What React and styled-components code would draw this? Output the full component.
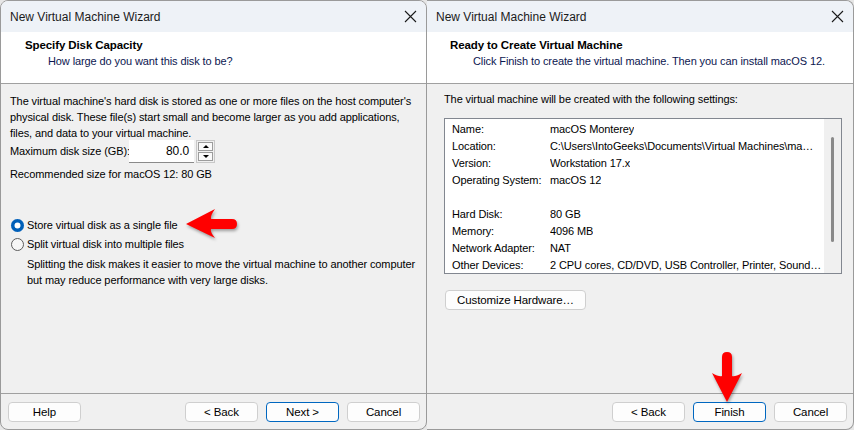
import React from "react";
import styled, { createGlobalStyle } from "styled-components";

const GlobalStyle = createGlobalStyle`
  html, body { margin: 0; padding: 0; background: #e6e6e6; }
  body {
    width: 854px; height: 430px; overflow: hidden;
    font-family: "Liberation Sans", Arial, sans-serif;
    font-size: 11px; letter-spacing: -0.1px; color: #000;
    white-space: nowrap;
  }
  * { box-sizing: border-box; }
`;

const Stage = styled.div`
  position: relative;
  display: flex;
  width: 854px;
  height: 430px;
`;

const Window = styled.div`
  width: 427px;
  height: 430px;
  display: flex;
  flex-direction: column;
  background: #f0f0f0;
  border: 1px solid #9a9a9a;
  border-left: ${(p) => (p.$joined ? "none" : "1px solid #9a9a9a")};
  border-radius: ${(p) => (p.$joined ? "0 8px 8px 0" : "8px")};
  overflow: hidden;
`;

const TitleBar = styled.div`
  height: 31px;
  flex: none;
  display: flex;
  align-items: center;
  justify-content: space-between;
  padding: 0 8px 0 ${(p) => p.$pad}px;
  background: #eef2f7;
  color: #1b1b1b;
  font-size: 12px;
  letter-spacing: 0;
`;

const Close = styled.svg`
  width: 13px;
  height: 13px;
  margin-right: 1px;
`;

const Header = styled.div`
  height: 52px;
  flex: none;
  background: #fff;
  border-bottom: 1px solid #a0a0a0;
  padding: 5px 0 0 ${(p) => p.$pad}px;
  line-height: 16px;
`;

const HeaderTitle = styled.div`
  font-weight: bold;
  font-size: 11.5px;
  color: #000;
`;

const HeaderSub = styled.div`
  padding-left: 23px;
  color: #0c1650;
`;

const Body = styled.div`
  flex: 1;
  padding: ${(p) => p.$pt}px 10px 0 ${(p) => p.$pl}px;
  line-height: 16px;
`;

const Para = styled.p`
  margin: 0;
`;

const SpinRow = styled.div`
  display: flex;
  align-items: center;
  height: 24px;
  margin-top: -2px;
`;

const SpinLabel = styled.span`
  width: 119px;
  flex: none;
`;

const SpinInput = styled.div`
  width: 65px;
  height: 23px;
  background: #fff;
  border-bottom: 1px solid #8a8a8a;
  text-align: right;
  padding-right: 5px;
  line-height: 22px;
  font-size: 12px;
`;

const SpinButtons = styled.div`
  display: flex;
  flex-direction: column;
  gap: 1px;
  margin-left: 2px;
  padding: 1px;
  border: 1px solid #c8c8c8;
`;

const SpinBtn = styled.div`
  width: 15px;
  height: 9px;
  background: #fafafa;
  border: 1px solid #9c9c9c;
  display: flex;
  align-items: center;
  justify-content: center;
  &::after {
    content: "";
    border-left: 3px solid transparent;
    border-right: 3px solid transparent;
    ${(p) => (p.$down ? "border-top: 3px solid #000;" : "border-bottom: 3px solid #000;")}
  }
`;

const Note = styled.div`
  margin-top: 3px;
`;

const RadioGroup = styled.div`
  margin-top: 35px;
  display: flex;
  flex-direction: column;
  gap: 3px;
`;

const RadioRow = styled.label`
  display: flex;
  align-items: center;
  gap: 3px;
  padding-left: 1px;
`;

const RadioDot = styled.span`
  width: 13px;
  height: 13px;
  border-radius: 50%;
  flex: none;
  ${(p) =>
    p.$on
      ? "background: #005fb8; box-shadow: inset 0 0 0 3.5px #005fb8, inset 0 0 0 7px #fff;"
      : "background: #f6f6f6; border: 1px solid #5c5c5c;"}
`;

const Indent = styled.p`
  margin: 4px 0 0 17px;
`;

const Footer = styled.div`
  height: 36px;
  flex: none;
  border-top: 1px solid #a0a0a0;
  display: flex;
  align-items: flex-start;
  gap: 8px;
  padding: 8px 6px 0 7px;
`;

const Spacer = styled.div`
  flex: 1;
`;

const Button = styled.button`
  width: ${(p) => p.$w || 73}px;
  height: 20px;
  padding: 0;
  font-family: inherit;
  font-size: 11.5px;
  letter-spacing: -0.1px;
  color: #000;
  background: #fdfdfd;
  border: 1px solid ${(p) => (p.$focus ? "#0067c0" : "#cfcfcf")};
  border-radius: 4px;
`;

const ListBox = styled.div`
  margin-top: 11px;
  width: 398px;
  height: 156px;
  border: 1px solid #828790;
  background: #fff;
  display: flex;
`;

const ListContent = styled.div`
  flex: 1;
  padding: 2px 0 0 7px;
  overflow: hidden;
`;

const ListRow = styled.div`
  display: flex;
  height: 17px;
  line-height: 17px;
`;

const ListKey = styled.span`
  width: 98px;
  flex: none;
`;

const ListVal = styled.span`
  overflow: hidden;
`;

const ScrollTrack = styled.div`
  width: 17px;
  flex: none;
  background: #f0f0f0;
  display: flex;
  justify-content: center;
  padding-top: 18px;
`;

const ScrollThumb = styled.div`
  width: 3px;
  height: 105px;
  border-radius: 2px;
  background: #8a8a8a;
`;

const CustomizeRow = styled.div`
  margin-top: 16px;
  padding-left: 1px;
`;

const Arrow = styled.svg`
  position: absolute;
  left: ${(p) => p.$x}px;
  top: ${(p) => p.$y}px;
  overflow: visible;
  filter: drop-shadow(1px 2px 1.5px rgba(0,0,0,0.35));
`;

const CloseIcon = () => (
  <Close viewBox="0 0 13 13">
    <path d="M1 1 L12 12 M12 1 L1 12" stroke="#1b1b1b" strokeWidth="1.1" fill="none" />
  </Close>
);

const rows = [
  ["Name:", "macOS Monterey"],
  ["Location:", "C:\\Users\\IntoGeeks\\Documents\\Virtual Machines\\ma…"],
  ["Version:", "Workstation 17.x"],
  ["Operating System:", "macOS 12"],
  ["", ""],
  ["Hard Disk:", "80 GB"],
  ["Memory:", "4096 MB"],
  ["Network Adapter:", "NAT"],
  ["Other Devices:", "2 CPU cores, CD/DVD, USB Controller, Printer, Sound…"],
];

export default function App() {
  return (
    <>
      <GlobalStyle />
      <Stage>
        <Window>
          <TitleBar $pad={9}>
            <span>New Virtual Machine Wizard</span>
            <CloseIcon />
          </TitleBar>
          <Header $pad={24}>
            <HeaderTitle>Specify Disk Capacity</HeaderTitle>
            <HeaderSub>How large do you want this disk to be?</HeaderSub>
          </Header>
          <Body $pt={9} $pl={9}>
            <Para>
              The virtual machine's hard disk is stored as one or more files on the host computer's
              <br />
              physical disk. These file(s) start small and become larger as you add applications,
              <br />
              files, and data to your virtual machine.
            </Para>
            <SpinRow>
              <SpinLabel>Maximum disk size (GB):</SpinLabel>
              <SpinInput>80.0</SpinInput>
              <SpinButtons>
                <SpinBtn />
                <SpinBtn $down />
              </SpinButtons>
            </SpinRow>
            <Note>Recommended size for macOS 12: 80 GB</Note>
            <RadioGroup>
              <RadioRow>
                <RadioDot $on />
                <span>Store virtual disk as a single file</span>
              </RadioRow>
              <RadioRow>
                <RadioDot />
                <span>Split virtual disk into multiple files</span>
              </RadioRow>
            </RadioGroup>
            <Indent>
              Splitting the disk makes it easier to move the virtual machine to another computer
              <br />
              but may reduce performance with very large disks.
            </Indent>
          </Body>
          <Footer>
            <Button>Help</Button>
            <Spacer />
            <Button>&lt; Back</Button>
            <Button $focus>Next &gt;</Button>
            <Button>Cancel</Button>
          </Footer>
        </Window>

        <Window $joined>
          <TitleBar $pad={9}>
            <span>New Virtual Machine Wizard</span>
            <CloseIcon />
          </TitleBar>
          <Header $pad={23}>
            <HeaderTitle>Ready to Create Virtual Machine</HeaderTitle>
            <HeaderSub>Click Finish to create the virtual machine. Then you can install macOS 12.</HeaderSub>
          </Header>
          <Body $pt={7} $pl={17}>
            <Para>The virtual machine will be created with the following settings:</Para>
            <ListBox>
              <ListContent>
                {rows.map(([k, v], i) => (
                  <ListRow key={i}>
                    <ListKey>{k}</ListKey>
                    <ListVal>{v}</ListVal>
                  </ListRow>
                ))}
              </ListContent>
              <ScrollTrack>
                <ScrollThumb />
              </ScrollTrack>
            </ListBox>
            <CustomizeRow>
              <Button $w={141}>Customize Hardware…</Button>
            </CustomizeRow>
          </Body>
          <Footer>
            <Spacer />
            <Button>&lt; Back</Button>
            <Button $focus>Finish</Button>
            <Button>Cancel</Button>
          </Footer>
        </Window>

        <Arrow $x={186} $y={208} width="52" height="31" viewBox="0 0 52 31">
          <path d="M0 16 L29 1 Q24 8 25 11 L46 11 Q51 11 51 16 Q51 21 46 21 L25 21 Q24 24 29 30 Z" fill="#ff0000" />
        </Arrow>
        <Arrow $x={711} $y={352} width="32" height="51" viewBox="0 0 32 51">
          <path d="M16 50 L1 21 Q8 25 11 24 L11 5 Q11 0 16 0 Q21 0 21 5 L21 24 Q24 25 31 21 Z" fill="#ff0000" />
        </Arrow>
      </Stage>
    </>
  );
}
